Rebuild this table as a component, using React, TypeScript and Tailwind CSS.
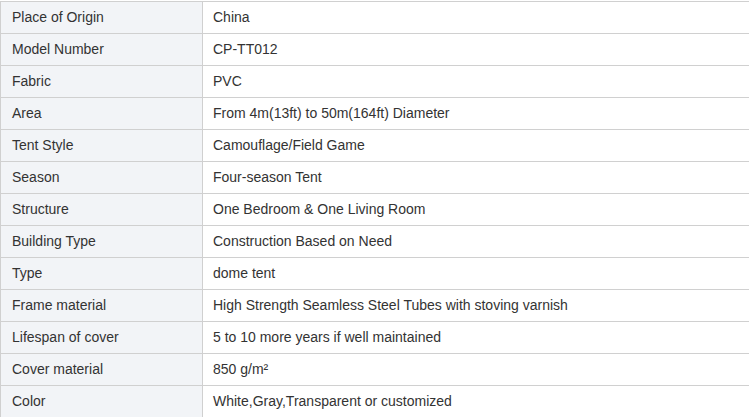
import React from 'react';

const rows: [string, string][] = [
  ['Place of Origin', 'China'],
  ['Model Number', 'CP-TT012'],
  ['Fabric', 'PVC'],
  ['Area', 'From 4m(13ft) to 50m(164ft) Diameter'],
  ['Tent Style', 'Camouflage/Field Game'],
  ['Season', 'Four-season Tent'],
  ['Structure', 'One Bedroom & One Living Room'],
  ['Building Type', 'Construction Based on Need'],
  ['Type', 'dome tent'],
  ['Frame material', 'High Strength Seamless Steel Tubes with stoving varnish'],
  ['Lifespan of cover', '5 to 10 more years if well maintained'],
  ['Cover material', '850 g/m²'],
  ['Color', 'White,Gray,Transparent or customized'],
];

export default function App() {
  return (
    <div className="w-[750px] h-[417px] overflow-hidden bg-white pt-px font-['Liberation_Sans',Arial,sans-serif] text-[14px] text-[#333]">
      <div className="w-[749px]">
        {rows.map(([label, value]) => (
          <div key={label} className="flex h-[32px] border-t border-[#d0d0d0]">
            <div className="w-[203px] shrink-0 border-x border-[#d0d0d0] bg-[#f2f4f7] pl-[11px] flex items-center">
              {label}
            </div>
            <div className="flex-1 pl-[10px] flex items-center">{value}</div>
          </div>
        ))}
      </div>
    </div>
  );
}
